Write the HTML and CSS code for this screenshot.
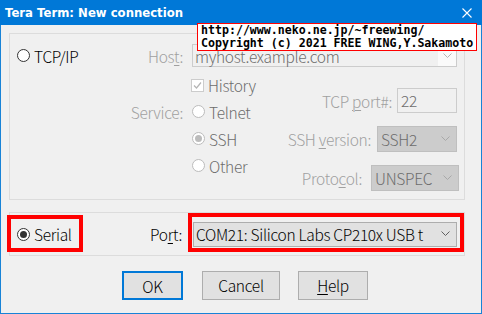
FILE: index.html
```html
<!DOCTYPE html>
<html>
<head>
<meta charset="utf-8">
<link rel="stylesheet" href="styles.css">
</head>
<body>
<div class="window">
  <div class="titlebar">
    <span class="title">Tera Term: New connection</span>
    <svg class="close" width="10" height="10" viewBox="0 0 10 10"><path d="M0.5 0.5 L9.5 9.5 M9.5 0.5 L0.5 9.5" stroke="#fff" stroke-width="1.1" fill="none"/></svg>
  </div>
  <div class="client">
    <div class="group tcp">
      <div class="row-host">
        <div class="tcpip"><span class="radio"></span><span>TCP/IP</span></div>
        <span class="lbl-dis host-lbl">Hos<u>t</u>:</span>
        <div class="combo-edit">
          <span class="edit-text">myhost.example.com</span>
          <span class="edit-btn"><svg width="9" height="6" viewBox="0 0 9 6"><path d="M0.5 0.5 L4.5 4.5 L8.5 0.5" stroke="#b5b5b5" fill="none"/></svg></span>
        </div>
      </div>
      <div class="svc">
        <div class="svc-lbl lbl-dis">Service:</div>
        <div class="svc-mid">
          <div class="opt opt-hist"><span class="check"><svg width="11" height="11" viewBox="0 0 11 11"><path d="M2 5.5 L4.5 8 L9 2.5" stroke="#b5b5b5" stroke-width="1.2" fill="none"/></svg></span><span>History</span></div>
          <div class="opt"><span class="radio dis"></span><span>Telnet</span></div>
          <div class="opt"><span class="radio dis on"></span><span>SSH</span></div>
          <div class="opt"><span class="radio dis"></span><span>Other</span></div>
        </div>
        <div class="svc-right">
          <div class="rrow r-port"><span class="lbl-dis">TCP <u>p</u>ort#:</span><div class="edit-dis">22</div></div>
          <div class="rrow r-ver"><span class="lbl-dis">SSH <u>v</u>ersion:</span><div class="combo-dis w-ver"><span>SSH2</span><svg width="9" height="6" viewBox="0 0 9 6"><path d="M0.5 0.5 L4.5 4.5 L8.5 0.5" stroke="#a8a8a8" fill="none"/></svg></div></div>
          <div class="rrow r-proto"><span class="lbl-dis">Proto<u>c</u>ol:</span><div class="combo-dis w-proto"><span>UNSPEC</span><svg width="9" height="6" viewBox="0 0 9 6"><path d="M0.5 0.5 L4.5 4.5 L8.5 0.5" stroke="#a8a8a8" fill="none"/></svg></div></div>
        </div>
      </div>
    </div>
    <div class="group serial">
      <div class="ser-item"><span class="radio on"></span><span>Serial</span></div>
      <span class="port-lbl">Po<u>r</u>t:</span>
      <div class="combo-port"><span>COM21: Silicon Labs CP210x USB t</span><svg width="9" height="6" viewBox="0 0 9 6"><path d="M0.5 0.5 L4.5 4.5 L8.5 0.5" stroke="#606060" fill="none"/></svg></div>
      <div class="mark mark-serial"></div>
      <div class="mark mark-port"></div>
    </div>
    <div class="buttons">
      <button class="btn btn-ok">OK</button>
      <button class="btn btn-cancel">Cancel</button>
      <button class="btn btn-help"><u>H</u>elp</button>
    </div>
  </div>
  <div class="banner">http://www.neko.ne.jp/~freewing/<br>Copyright (c) 2021 FREE WING,Y.Sakamoto</div>
</div>
</body>
</html>
```
FILE: styles.css
```css
* { box-sizing: border-box; }
html, body { margin: 0; padding: 0; }
body {
  width: 482px;
  height: 314px;
  overflow: hidden;
  background: #f0f0f0;
  font-family: "Noto Sans CJK JP", "Noto Sans", sans-serif;
  font-weight: 300;
  font-size: 15.5px;
  letter-spacing: -0.3px;
  color: #000;
}
u { text-decoration: underline; text-underline-offset: 2px; text-decoration-thickness: 1px; }
.window {
  position: relative;
  width: 482px;
  height: 314px;
  border: 1px solid #1883d7;
  border-top: 0;
  background: #f0f0f0;
  display: flex;
  flex-direction: column;
}
.titlebar {
  height: 25px;
  flex: none;
  margin: 0 -1px;
  padding: 0 10px 0 5px;
  background: #0078d7;
  color: #fff;
  display: flex;
  align-items: center;
  justify-content: space-between;
}
.title {
  font-family: "DejaVu Sans", sans-serif;
  font-weight: bold;
  font-size: 11.7px;
  letter-spacing: 0;
  line-height: 14px;
}
.client { padding: 8px 16px 0 8px; }
.group { border: 1px solid #dcdcdc; position: relative; }
.group.tcp { height: 167px; padding: 10px 7px 0 0; }
.radio {
  width: 13px; height: 13px;
  border: 1px solid #333;
  border-radius: 50%;
  background: #fff;
  flex: none;
  position: relative;
}
.radio.on::after {
  content: "";
  position: absolute;
  left: 2px; top: 2px;
  width: 7px; height: 7px;
  border-radius: 50%;
  background: #333;
}
.radio.dis { border-color: #bcbcbc; }
.radio.dis.on::after { background: #bcbcbc; }
.lbl-dis { color: #a0a0a0; }
.row-host { display: flex; align-items: center; height: 23px; padding-left: 7px; }
.tcpip { flex: 1; display: flex; align-items: center; gap: 4px; line-height: 20px; }
.host-lbl { margin-right: 9px; line-height: 20px; }
.combo-edit {
  width: 265px; height: 23px;
  border: 1px solid #cccccc;
  background: #f0f0f0;
  display: flex;
  align-items: stretch;
  color: #6d6d6d;
}
.edit-text { flex: 1; padding-left: 2px; line-height: 22px; }
.edit-btn { width: 18px; background: #fafafa; display: flex; align-items: center; justify-content: center; }
.svc { display: flex; height: 123px; }
.svc-lbl { width: 173px; margin-right: 8px; text-align: right; padding-top: 35px; line-height: 20px; }
.svc-mid { flex: 1; padding-top: 5px; color: #6d6d6d; }
.opt { display: flex; align-items: center; height: 27px; gap: 4px; padding-left: 1px; line-height: 20px; }
.opt-hist { height: 26px; padding-left: 0; gap: 4px; }
.check {
  width: 13px; height: 13px;
  border: 1px solid #cccccc;
  background: #fff;
  display: flex; align-items: center; justify-content: center;
}
.svc-right { display: flex; flex-direction: column; align-items: flex-end; padding-top: 21px; }
.rrow { display: flex; align-items: center; line-height: 20px; }
.r-port { height: 25px; gap: 5px; }
.r-ver { height: 26px; gap: 6px; margin-top: 13px; }
.r-proto { height: 26px; gap: 9px; margin-top: 13px; margin-right: -2px; }
.edit-dis {
  width: 60px; height: 25px;
  border: 1px solid #cccccc;
  background: #f0f0f0;
  color: #6d6d6d;
  padding-left: 3px;
  line-height: 23px;
}
.combo-dis {
  height: 26px;
  border: 1px solid #bfbfbf;
  background: #cccccc;
  color: #6d6d6d;
  display: flex;
  align-items: center;
  justify-content: space-between;
  padding: 0 6px 0 3px;
  line-height: 24px;
}
.w-ver { width: 80px; }
.w-proto { width: 88px; }
.group.serial {
  margin-top: 12px;
  height: 44px;
  display: flex;
  align-items: center;
  padding: 0 7px 0 7px;
}
.ser-item { flex: 1; display: flex; align-items: center; gap: 4px; line-height: 20px; }
.port-lbl { margin-right: 11px; line-height: 20px; }
.combo-port {
  width: 264px; height: 25px;
  border: 1px solid #adadad;
  background: #e1e1e1;
  display: flex;
  align-items: center;
  justify-content: space-between;
  padding: 0 6px 0 2px;
  line-height: 23px;
  white-space: nowrap;
}
.mark { position: absolute; border: 4px solid #ff0000; }
.mark-serial { left: -3px; top: 2px; width: 76px; height: 37px; }
.mark-port { left: 178px; top: 0px; width: 276px; height: 39px; }
.buttons { display: flex; margin-top: 15px; padding-left: 113px; }
.btn {
  height: 29px;
  border: 1px solid #adadad;
  background: #e1e1e1;
  font-family: inherit;
  font-weight: 300;
  font-size: 15.5px;
  letter-spacing: -0.3px;
  color: #000;
  padding: 0;
  line-height: 27px;
}
.btn-ok { width: 61px; border: 2px solid #0078d7; }
.btn-cancel { width: 78px; margin-left: 19px; }
.btn-help { width: 70px; margin-left: 18px; }
.banner {
  position: absolute;
  left: 196px;
  top: 23px;
  width: 280px;
  height: 28px;
  border: 1px solid #ff0000;
  background: #fff;
  font-family: "DejaVu Sans Mono", monospace;
  font-weight: bold;
  font-size: 11.6px;
  letter-spacing: 0;
  line-height: 13px;
  padding: 0 0 0 3px;
  white-space: nowrap;
  color: #000;
}
```
